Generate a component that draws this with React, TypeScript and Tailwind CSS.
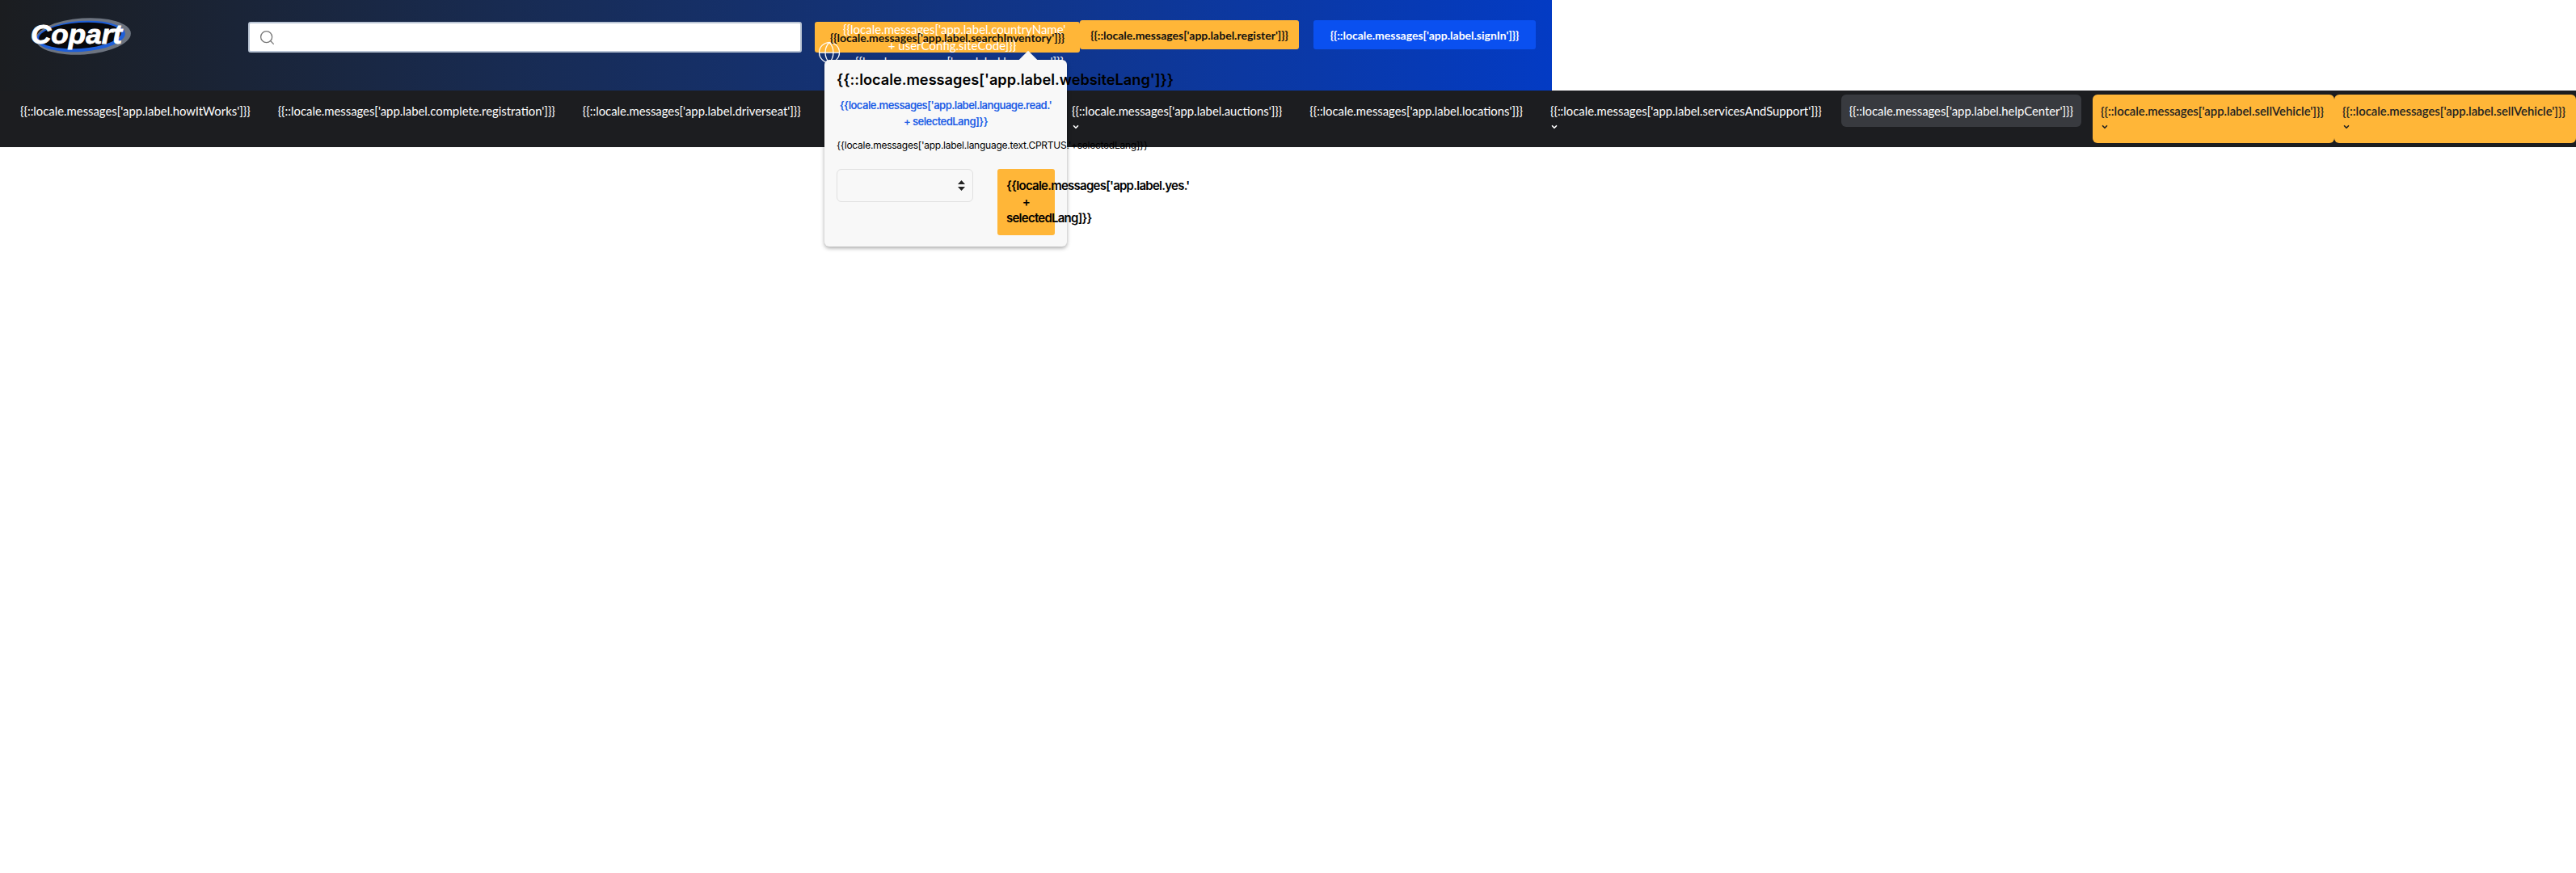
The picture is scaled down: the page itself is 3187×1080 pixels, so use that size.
import { ChevronDown, Search, Globe } from 'lucide-react';

const navItems = [
  { key: 'howItWorks' },
  { key: 'complete.registration' },
  { key: 'driverseat' },
  { key: 'spacer' },
  { key: 'auctions', menu: true },
  { key: 'locations' },
  { key: 'servicesAndSupport', menu: true },
];

function NavLabel({ name }: { name: string }) {
  return <span>{`{{::locale.messages['app.label.${name}']}}`}</span>;
}

function Caret({ dark }: { dark?: boolean }) {
  return (
    <div className="h-[20px] flex items-center">
      <ChevronDown size={10} strokeWidth={4} className={dark ? 'text-[#222]' : 'text-white'} />
    </div>
  );
}

function Logo() {
  return (
    <svg width="126" height="46" viewBox="0 0 126 46" className="shrink-0">
      <ellipse cx="66" cy="23" rx="59" ry="22.5" fill="#6d7480" transform="rotate(-4 66 23)" />
      <ellipse cx="63" cy="23" rx="55" ry="19" fill="#1f5fd8" transform="rotate(-4 63 23)" />
      <ellipse cx="62" cy="22" rx="51" ry="16" fill="#07080c" transform="rotate(-4 62 22)" />
      <text x="1" y="32" fill="#fff" fontFamily="'Liberation Sans', sans-serif" fontSize="34" fontWeight="700" fontStyle="italic" stroke="#fff" strokeWidth="0.8" textLength="113" lengthAdjust="spacingAndGlyphs">Copart</text>
    </svg>
  );
}

function LanguagePopup() {
  return (
    <div className="absolute z-20 left-[1020px] top-[74px] w-[300px] h-[231px] bg-[#f8f8f8] rounded-md shadow-[0_2px_5px_rgba(0,0,0,0.35)] p-[15px] text-black font-['Inter',sans-serif]">
      <div className="absolute right-[40px] -top-[8px] w-[16px] h-[16px] rotate-45 bg-[#f8f8f8]" />
      <h2 className="relative whitespace-nowrap text-[18.2px] leading-[24px] font-semibold -mt-[3px]">{"{{::locale.messages['app.label.websiteLang']}}"}</h2>
      <p className="mt-[10px] text-center text-[#1f5fe6] font-semibold text-[13px] leading-[20px] tracking-[-0.55px]">
        {"{{locale.messages['app.label.language.read.'"}<br />{'+ selectedLang]}}'}
      </p>
      <p className="mt-[10px] whitespace-nowrap text-[12px] leading-[20px] tracking-[-0.25px]">{"{{locale.messages['app.label.language.text.CPRTUS.'+selectedLang]}}"}</p>
      <div className="flex mt-[19px]">
        <div className="w-[169px] h-[41px] border border-[#e0e0e0] rounded-md flex items-center justify-end pr-[9px]">
          <svg width="9" height="13" viewBox="0 0 9 13"><path d="M4.5 0 9 5H0zM4.5 13 0 8h9z" fill="#222" /></svg>
        </div>
        <button className="ml-[30px] w-[71px] h-[82px] bg-[#ffb638] rounded-[3px] px-[11px] text-center text-[15px] leading-[20px] font-semibold tracking-[-0.75px]">
          {"{{locale.messages['app.label.yes.' + selectedLang]}}"}
        </button>
      </div>
    </div>
  );
}

export default function App() {
  return (
    <div className="relative w-[3187px] font-['Lato',sans-serif] bg-white min-h-[1080px]">
      <header className="w-[1920px] h-[112px] flex items-start bg-gradient-to-r from-[#1b1d20] to-[#033bc4]">
        <div className="ml-[37px] mt-[22px]"><Logo /></div>
        <div className="ml-[144px] mt-[27px] w-[685px] h-[38px] bg-white rounded-[3px] border-2 border-[#b9c4d4] flex items-center pl-[11px]">
          <Search size={21} strokeWidth={1.5} className="text-[#777]" />
        </div>
        <div className="ml-[16px] mt-[27px] w-[328px] h-[38px] bg-[#ffb638] rounded-[3px] flex items-center justify-center text-[#111] font-bold text-[14px]">
          <span className="relative z-10 whitespace-nowrap">{"{{locale.messages['app.label.searchInventory']}}"}</span>
        </div>
        <div className="mt-[25px] w-[271px] h-[36px] bg-[#ffb638] rounded-[3px] flex items-center justify-center text-[#111] font-bold text-[14px]">
          {"{{::locale.messages['app.label.register']}}"}
        </div>
        <div className="ml-[18px] mt-[25px] w-[275px] h-[36px] bg-[#0a50f0] rounded-[3px] flex items-center justify-center text-white font-bold text-[14px]">
          {"{{::locale.messages['app.label.signIn']}}"}
        </div>
      </header>

      {/* country label spills over the search button */}
      <div className="absolute left-[1043px] top-[26px] w-[270px] text-center text-white text-[15px] leading-[20px] pointer-events-none">
        {"{{locale.messages['app.label.countryName'"}<br />{'+ userConfig.siteCode]}}'}
      </div>
      <div className="absolute left-[1058px] top-[66px] whitespace-nowrap text-white text-[15px] leading-[20px]">{"{{locale.messages['app.label.language']}}"}</div>
      <div className="absolute left-[1254px] top-[48px] w-px h-[15px] bg-white/50" />
      <Globe size={30} strokeWidth={1} className="absolute left-[1011px] top-[50px] text-white" />

      <nav className="h-[70px] bg-[#1c1d20] flex items-start pt-[5px] pl-[15px] gap-[14px] text-[14.85px] leading-[20px] text-white whitespace-nowrap">
        {navItems.map(item => item.key === 'spacer' ? (
          <div key={item.key} className="w-[316px] -ml-[14px] -mr-[14px]" />
        ) : (
          <div key={item.key} className="p-[10px]">
            <NavLabel name={item.key} />
            {item.menu && <Caret />}
          </div>
        ))}
        <div className="p-[10px] bg-[#383a3f] rounded-md">
          <NavLabel name="helpCenter" />
        </div>
        <div className="flex ml-auto">
          {[0, 1].map(i => (
            <div key={i} className="w-[299px] p-[10px] bg-[#ffb638] rounded-md text-[#222] font-semibold">
              <NavLabel name="sellVehicle" />
              <Caret dark />
            </div>
          ))}
        </div>
      </nav>

      <LanguagePopup />
    </div>
  );
}
